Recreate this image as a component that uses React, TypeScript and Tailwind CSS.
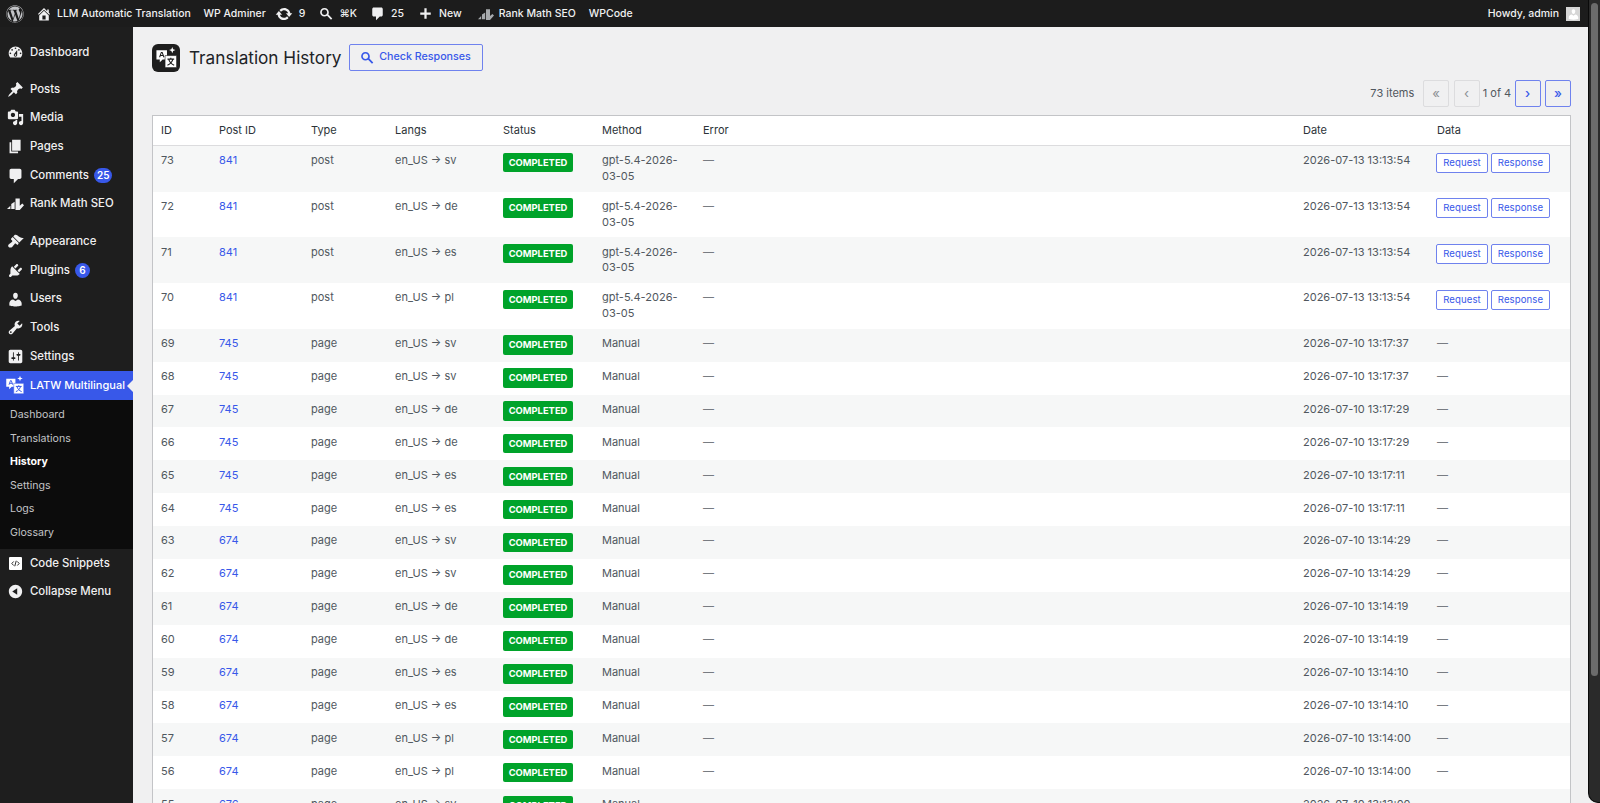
import React from 'react';
import { FaWordpress } from 'react-icons/fa';

const P: Record<string, string> = {
  dashboard: "M3.76 16h12.48c1.1-1.37 1.76-3.11 1.76-5 0-4.42-3.58-8-8-8s-8 3.58-8 8c0 1.89.66 3.63 1.76 5zM10 4c.55 0 1 .45 1 1s-.45 1-1 1-1-.45-1-1 .45-1 1-1zM6 6c.55 0 1 .45 1 1s-.45 1-1 1-1-.45-1-1 .45-1 1-1zm8 0c.55 0 1 .45 1 1s-.45 1-1 1-1-.45-1-1 .45-1 1-1zm-5.37 5.55L12 7v6c0 1.1-.9 2-2 2s-2-.9-2-2c0-.57.24-1.08.63-1.45zM4 10c.55 0 1 .45 1 1s-.45 1-1 1-1-.45-1-1 .45-1 1-1zm12 0c.55 0 1 .45 1 1s-.45 1-1 1-1-.45-1-1 .45-1 1-1zm-5 3c0-.55-.45-1-1-1s-1 .45-1 1 .45 1 1 1 1-.45 1-1z",
  posts: "M10.44 3.02l1.82-1.82 6.36 6.35-1.83 1.82c-1.05-.68-2.48-.57-3.41.36l-.75.75c-.92.93-1.04 2.35-.35 3.41l-1.83 1.82-2.41-2.41-2.8 2.79c-.42.42-3.38 2.71-3.8 2.29s1.86-3.39 2.28-3.81l2.79-2.79L4.1 9.36l1.83-1.82c1.05.69 2.48.57 3.41-.36l.75-.75c.93-.92 1.04-2.35.35-3.41z",
  media: "M13 11V4c0-.55-.45-1-1-1h-1.67L9 1H5L3.67 3H2c-.55 0-1 .45-1 1v7c0 .55.45 1 1 1h10c.55 0 1-.45 1-1zM7 4.5c1.38 0 2.5 1.12 2.5 2.5S8.38 9.5 7 9.5 4.5 8.38 4.5 7 5.62 4.5 7 4.5zM14 6h5v10.5c0 1.38-1.12 2.5-2.5 2.5S14 17.88 14 16.5s1.12-2.5 2.5-2.5c.17 0 .34.02.5.05V9h-3V6zm-4 8.05V13h2v3.5c0 1.38-1.12 2.5-2.5 2.5S7 17.88 7 16.5 8.12 14 9.5 14c.17 0 .34.02.5.05z",
  pages: "M6 15V2h10v13H6zm-1 1h8v2H3V5h2v11z",
  comments: "M5 2h10c1.1 0 2 .9 2 2v8c0 1.1-.9 2-2 2h-2l-5 5v-5H5c-1.1 0-2-.9-2-2V4c0-1.1.9-2 2-2z",
  appearance: "M14.48 11.06L7.41 3.99l1.5-1.5c.5-.56 2.3-.47 3.51.32 1.21.8 1.43 1.28 2.91 2.1 1.18.64 2.45 1.26 4.45.85zm-.71.71L6.7 4.7 4.93 6.47c-.39.39-.39 1.02 0 1.41l1.06 1.06c.39.39.39 1.03 0 1.42-.6.6-1.43 1.11-2.21 1.69-.35.26-.7.53-1.01.84C1.43 13.23.78 15.24 2 16.5s3.27.59 4.61-.76c.31-.31.58-.66.84-1.01.58-.78 1.09-1.61 1.69-2.21.39-.39 1.02-.39 1.41 0l1.06 1.06c.39.39 1.02.39 1.41 0z",
  plugins: "M13.11 4.36L9.87 7.6 8 5.73l3.24-3.24c.35-.34 1.05-.2 1.56.32.52.51.66 1.21.31 1.55zm-8 1.77l.91-1.12 9.01 9.01-1.19.84c-.71.71-2.63 1.16-3.82 1.16H6.14L4.9 17.26c-.59.59-1.54.59-2.12 0-.59-.58-.59-1.53 0-2.12l1.24-1.24v-3.88c0-1.13.4-3.19 1.09-3.89zm7.26 3.97l3.24-3.24c.34-.35 1.04-.21 1.55.31.52.51.66 1.21.31 1.55l-3.24 3.25z",
  users: "M10 9.25c-2.27 0-2.73-3.44-2.73-3.44C7 4.02 7.82 2 9.97 2c2.16 0 2.98 2.02 2.71 3.81 0 0-.41 3.44-2.68 3.44zm0 2.57L12.72 10c2.39 0 4.52 2.33 4.52 4.53v2.49s-3.65 1.13-7.24 1.13c-3.65 0-7.24-1.13-7.24-1.13v-2.49c0-2.25 1.94-4.48 4.47-4.48z",
  tools: "M16.68 9.77c-1.34 1.34-3.3 1.67-4.95.99l-5.41 6.52c-.99.99-2.59.99-3.58 0s-.99-2.59 0-3.57l6.52-5.42c-.68-1.65-.35-3.61.99-4.95 1.28-1.28 3.12-1.62 4.72-1.06l-2.89 2.89 2.82 2.82 2.86-2.87c.53 1.58.18 3.39-1.08 4.65zM3.81 16.21c.4.39 1.04.39 1.43 0 .4-.4.4-1.04 0-1.43-.39-.4-1.03-.4-1.43 0-.39.39-.39 1.03 0 1.43z",
  settings: "M18 16V4c0-1.1-.9-2-2-2H4c-1.1 0-2 .9-2 2v12c0 1.1.9 2 2 2h12c1.1 0 2-.9 2-2zM8 11h1c.55 0 1 .45 1 1s-.45 1-1 1H8v1.5c0 .28-.22.5-.5.5s-.5-.22-.5-.5V13H6c-.55 0-1-.45-1-1s.45-1 1-1h1V5.5c0-.28.22-.5.5-.5s.5.22.5.5V11zm5-2h-1c-.55 0-1-.45-1-1s.45-1 1-1h1V5.5c0-.28.22-.5.5-.5s.5.22.5.5V7h1c.55 0 1 .45 1 1s-.45 1-1 1h-1v5.5c0 .28-.22.5-.5.5s-.5-.22-.5-.5V9z",
  collapse: "M10 2.16c4.33 0 7.84 3.51 7.84 7.84s-3.51 7.84-7.84 7.84S2.16 14.33 2.16 10 5.71 2.16 10 2.16zm2 11.72V6.12L6.18 9.97z",
  update: "M10.2 3.28c3.53 0 6.43 2.61 6.92 6h2.08l-3.5 4-3.5-4h2.32c-.45-1.97-2.21-3.45-4.32-3.45-1.45 0-2.73.71-3.54 1.78L4.95 5.66C6.23 4.2 8.11 3.28 10.2 3.28zm-.4 13.44c-3.52 0-6.43-2.61-6.92-6H.8l3.5-4c1.17 1.33 2.33 2.67 3.5 4H5.48c.45 1.97 2.21 3.45 4.32 3.45 1.45 0 2.73-.71 3.54-1.78l1.71 1.95c-1.28 1.46-3.15 2.38-5.25 2.38z",
  home: "M16 8.5l1.53 1.53-1.06 1.06L10 4.62l-6.47 6.47-1.06-1.06L10 2.5l4 4v-2h2v4zm-6-2.46l6 5.99V18H4v-5.97zM12 17v-5H8v5h4z",
  plus: "M17 8.5v3h-5.5V17h-3v-5.5H3v-3h5.5V3h3v5.5H17z",
  search: "M12.5 11.3l5.2 5.2-1.7 1.7-5.2-5.2c-1 .7-2.2 1.1-3.4 1.1C4 14.1 1.5 11.6 1.5 8.3S4 2.5 7.3 2.5s5.8 2.5 5.8 5.8c0 1.1-.2 2.1-.6 3zM7.3 4.7c-2 0-3.6 1.6-3.6 3.6s1.6 3.6 3.6 3.6 3.6-1.6 3.6-3.6-1.6-3.6-3.6-3.6z",
  rank: "M0 16.5l4-4v4zM5 16.5V10.5l4-2.5V16.5zM10 16.5V4h5v8.5l3-2.5 2 2-5 5.500H10z",
};

function Dash({ n, c = 'w-[17px] h-[17px]' }: { n: string; c?: string }) {
  return (
    <svg viewBox="0 0 20 20" fill="currentColor" className={c}>
      <path d={P[n]} fillRule="evenodd" />
    </svg>
  );
}

function TranslateGlyph({ c }: { c: string }) {
  return (
    <svg viewBox="0 0 24 24" className={c}>
      <path d="M1.5 4.5h11v9.5H8l-3 3v-3H1.5z" fill="currentColor" />
      <path d="M4.8 11.7l1.8-5h.9l1.8 5M5.5 10h3.2" fill="none" stroke="var(--g,#1e1e1e)" strokeWidth="1.1" />
      <path d="M10.5 10h12v12.5h-12z" fill="currentColor" stroke="var(--g,#1e1e1e)" strokeWidth="0.6" />
      <path d="M13 13.7h7M16.5 12.3v1.4M18.7 13.7c-.7 2.900-3 5.200-5.700 6.300M14.300 13.700c.7 2.900 3 5.200 5.700 6.300" fill="none" stroke="var(--g,#1e1e1e)" strokeWidth="1.2" />
      <path d="M18 1l.9 2.400 2.400.9-2.400.9-.9 2.400-.9-2.400-2.400-.9 2.400-.9z" fill="currentColor" />
    </svg>
  );
}

type Item = { label: string; icon: string; badge?: string };
const menuA: Item[] = [
  { label: 'Posts', icon: 'posts' },
  { label: 'Media', icon: 'media' },
  { label: 'Pages', icon: 'pages' },
  { label: 'Comments', icon: 'comments', badge: '25' },
  { label: 'Rank Math SEO', icon: 'rank' },
];
const menuB: Item[] = [
  { label: 'Appearance', icon: 'appearance' },
  { label: 'Plugins', icon: 'plugins', badge: '6' },
  { label: 'Users', icon: 'users' },
  { label: 'Tools', icon: 'tools' },
  { label: 'Settings', icon: 'settings' },
];

function MenuRow({ label, icon, badge }: Item) {
  return (
    <div className="h-[28.6px] flex items-center text-[#f0f0f1] text-[11.4px] font-medium">
      <span className="w-[30px] flex justify-center pl-[1px] shrink-0">
        <Dash n={icon} />
      </span>
      <span>{label}</span>
      {badge && (
        <span className="ml-[5px] h-[15px] min-w-[15px] px-[3px] rounded-full bg-[#3858e9] text-white text-[10px] leading-[15px] text-center font-semibold">
          {badge}
        </span>
      )}
    </div>
  );
}

function TopItem({ children }: { children: React.ReactNode }) {
  return <div className="flex items-center h-full">{children}</div>;
}

type Row = [number, number, string, string, string, string, string];
const big: Row[] = [
  [73, 841, 'post', 'sv', 'gpt', '—', '2026-07-13 13:13:54'],
  [72, 841, 'post', 'de', 'gpt', '—', '2026-07-13 13:13:54'],
  [71, 841, 'post', 'es', 'gpt', '—', '2026-07-13 13:13:54'],
  [70, 841, 'post', 'pl', 'gpt', '—', '2026-07-13 13:13:54'],
];
const small: Row[] = [
  [69, 745, 'page', 'sv', 'Manual', '—', '2026-07-10 13:17:37'],
  [68, 745, 'page', 'sv', 'Manual', '—', '2026-07-10 13:17:37'],
  [67, 745, 'page', 'de', 'Manual', '—', '2026-07-10 13:17:29'],
  [66, 745, 'page', 'de', 'Manual', '—', '2026-07-10 13:17:29'],
  [65, 745, 'page', 'es', 'Manual', '—', '2026-07-10 13:17:11'],
  [64, 745, 'page', 'es', 'Manual', '—', '2026-07-10 13:17:11'],
  [63, 674, 'page', 'sv', 'Manual', '—', '2026-07-10 13:14:29'],
  [62, 674, 'page', 'sv', 'Manual', '—', '2026-07-10 13:14:29'],
  [61, 674, 'page', 'de', 'Manual', '—', '2026-07-10 13:14:19'],
  [60, 674, 'page', 'de', 'Manual', '—', '2026-07-10 13:14:19'],
  [59, 674, 'page', 'es', 'Manual', '—', '2026-07-10 13:14:10'],
  [58, 674, 'page', 'es', 'Manual', '—', '2026-07-10 13:14:10'],
  [57, 674, 'page', 'pl', 'Manual', '—', '2026-07-10 13:14:00'],
  [56, 674, 'page', 'pl', 'Manual', '—', '2026-07-10 13:14:00'],
  [55, 676, 'page', 'sv', 'Manual', '—', '2026-07-10 13:13:00'],
];

const COLS = 'grid grid-cols-[58px_92px_84px_108px_99px_101px_600px_134px_1fr]';

function SmallBtn({ w, children }: { w: string; children: React.ReactNode }) {
  return (
    <span className={`${w} inline-flex items-center justify-center h-[20px] border border-[#6f82ee] rounded-[2px] bg-white text-[#3858e9] text-[9.6px] tracking-[0.1px]`}>
      {children}
    </span>
  );
}

function PageBtn({ children, on }: { children: React.ReactNode; on?: boolean }) {
  return (
    <span
      className={
        on
          ? 'w-[26px] h-[27px] flex items-center justify-center border border-[#6f82ee] rounded-[2px] text-[#3858e9] text-[13px] font-medium'
          : 'w-[26px] h-[27px] flex items-center justify-center border border-[#dcdcde] rounded-[2px] bg-[#f0f0f1] text-[#8c8f94] text-[13px]'
      }
    >
      {children}
    </span>
  );
}

function TableRow({ r, i }: { r: Row; i: number }) {
  const gpt = r[4] === 'gpt';
  return (
    <div className={`${COLS} ${gpt ? 'h-[45.7px]' : 'h-[32.9px]'} ${i % 2 === 0 ? 'bg-[#f6f7f7]' : 'bg-white'} text-[#50575e] text-[11px] leading-[15.5px]`}>
      <div className="pl-[8px] pt-[7.4px]">{r[0]}</div>
      <div className="pl-[8px] pt-[7.4px] text-[#3858e9]">{r[1]}</div>
      <div className="pl-[8px] pt-[7.4px]">{r[2]}</div>
      <div className="pl-[8px] pt-[7.4px]">en_US → {r[3]}</div>
      <div className="pl-[8px] pt-[6.5px]">
        <span className="inline-flex items-center justify-center w-[70px] h-[19.5px] rounded-[2px] bg-[#00a32a] text-white text-[9.4px] font-bold">COMPLETED</span>
      </div>
      <div className="pl-[8px] pt-[7.4px] pr-[6px]">{gpt ? 'gpt-5.4-2026-03-05' : r[4]}</div>
      <div className="pl-[8px] pt-[7.4px] text-[#787c82]">{r[5]}</div>
      <div className="pl-[8px] pt-[7.4px]">{r[6]}</div>
      {gpt ? (
        <div className="pl-[7px] pt-[6.5px] flex items-start gap-[3px]">
          <SmallBtn w="w-[52px]">Request</SmallBtn>
          <SmallBtn w="w-[59px]">Response</SmallBtn>
        </div>
      ) : (
        <div className="pl-[8px] pt-[7.4px] text-[#787c82]">—</div>
      )}
    </div>
  );
}

export default function App() {
  return (
    <div className="relative h-[803px] w-[1600px] overflow-hidden bg-[#f0f0f1] flex flex-col font-['Inter','Liberation_Sans',sans-serif]">
      {/* Admin bar */}
      <header className="h-[27px] shrink-0 bg-[#1c1c1c] text-[#f0f0f1] text-[10.5px] font-medium flex items-center pl-[6px] pr-[20px]">
        <TopItem><FaWordpress className="w-[18px] h-[18px] text-[#c3c4c7]" /></TopItem>
        <TopItem><span className="ml-[12px]"><Dash n="home" c="w-[16px] h-[16px]" /></span><span className="ml-[5px]">LLM Automatic Translation</span></TopItem>
        <TopItem><span className="ml-[12.5px]">WP Adminer</span></TopItem>
        <TopItem><span className="ml-[9px]"><Dash n="update" c="w-[18px] h-[18px]" /></span><span className="ml-[6px]">9</span></TopItem>
        <TopItem><span className="ml-[14px]"><Dash n="search" c="w-[15px] h-[15px]" /></span><span className="ml-[5px]">⌘K</span></TopItem>
        <TopItem><span className="ml-[13px]"><Dash n="comments" c="w-[15px] h-[15px]" /></span><span className="ml-[6px]">25</span></TopItem>
        <TopItem><span className="ml-[14px]"><Dash n="plus" c="w-[15px] h-[15px]" /></span><span className="ml-[6px]">New</span></TopItem>
        <TopItem><span className="ml-[16px] text-[#a7aaad]"><Dash n="rank" c="w-[16px] h-[16px]" /></span><span className="ml-[5px]">Rank Math SEO</span></TopItem>
        <TopItem><span className="ml-[13px]">WPCode</span></TopItem>
        <div className="ml-auto flex items-center h-full">
          <span>Howdy, admin</span>
          <span className="ml-[7px] w-[14px] h-[14px] bg-[#d6d6d6] flex items-end justify-center overflow-hidden text-white"><Dash n="users" c="w-[13px] h-[13px]" /></span>
        </div>
      </header>

      <div className="flex flex-1 min-h-0">
        {/* Sidebar */}
        <aside className="w-[133px] shrink-0 bg-[#1e1e1e] pt-[11px]">
          <MenuRow label="Dashboard" icon="dashboard" />
          <div className="h-[8.5px]" />
          {menuA.map((m) => <MenuRow key={m.label} {...m} />)}
          <div className="h-[9.5px]" />
          {menuB.map((m) => <MenuRow key={m.label} {...m} />)}
          <div className="relative h-[29px] bg-[#3858e9] flex items-center text-white text-[11px] font-medium whitespace-nowrap">
            <span className="w-[30px] pl-[5px] shrink-0 [--g:#3858e9]"><TranslateGlyph c="w-[20px] h-[20px]" /></span>
            <span>LATW Multilingual</span>
            <span className="absolute right-0 top-[9px] w-0 h-0 border-y-[6px] border-y-transparent border-r-[6px] border-r-[#f0f0f1]" />
          </div>
          <div className="bg-[#0c0c0c] h-[149px] pt-[4px] pl-[10px] text-[#c3c4c7] text-[10.6px]">
            {['Dashboard', 'Translations', 'History', 'Settings', 'Logs', 'Glossary'].map((s) => (
              <div key={s} className={`h-[23.5px] flex items-center ${s === 'History' ? 'text-white font-bold' : ''}`}>{s}</div>
            ))}
          </div>
          <div className="h-[28.6px] mt-[1px] flex items-center text-[#f0f0f1] text-[11.4px] font-medium">
            <span className="w-[30px] flex justify-center shrink-0 pl-[1px]">
              <span className="w-[13px] h-[13px] bg-white rounded-[1px] flex items-center justify-center">
                <svg viewBox="0 0 12 12" className="w-[11px] h-[11px]" fill="none" stroke="#1e1e1e" strokeWidth="1"><path d="M4 3.8L2 6l2 2.2M8 3.8L10 6 8 8.2M6.8 3L5.2 9" /></svg>
              </span>
            </span>
            <span>Code Snippets</span>
          </div>
          <div className="-mt-[0.5px]"><MenuRow label="Collapse Menu" icon="collapse" /></div>
        </aside>

        {/* Content */}
        <main className="flex-1 min-w-0 pl-[19px] pr-[17px] pt-[17px]">
          <div className="flex items-center h-[27px]">
            <span className="w-[28px] h-[28px] rounded-[6px] bg-[#1e1e1e] text-white flex items-center justify-center">
              <TranslateGlyph c="w-[23px] h-[23px]" />
            </span>
            <h1 className="ml-[9px] text-[17.2px] leading-none text-[#1d2327] font-normal">Translation History</h1>
            <button className="ml-[7px] w-[134px] h-[27px] flex items-center justify-center gap-[4px] border border-[#6f82ee] rounded-[2px] text-[#3858e9] text-[10.7px] font-medium">
              <Dash n="search" c="w-[15px] h-[15px]" />
              Check Responses
            </button>
          </div>
          <div className="mt-[9px] h-[27px] flex items-center justify-end text-[#50575e] text-[11px]">
            <span className="mr-[8.7px]">73 items</span>
            <PageBtn>«</PageBtn>
            <span className="w-[4.5px]" />
            <PageBtn>‹</PageBtn>
            <span className="w-[35px] text-center">1 of 4</span>
            <PageBtn on>›</PageBtn>
            <span className="w-[4.5px]" />
            <PageBtn on>»</PageBtn>
          </div>
          <div className="mt-[8px] border border-[#c3c4c7] bg-white">
            <div className={`${COLS} h-[30px] items-center border-b border-[#dcdcde] text-[#2c3338] text-[11px]`}>
              {['ID', 'Post ID', 'Type', 'Langs', 'Status', 'Method', 'Error', 'Date', 'Data'].map((h) => (
                <div key={h} className="pl-[8px]">{h}</div>
              ))}
            </div>
            {big.map((r, i) => <TableRow key={r[0]} r={r} i={i} />)}
            {small.map((r, i) => <TableRow key={r[0]} r={r} i={i} />)}
          </div>
        </main>
        {/* Scrollbar */}
        <div className="w-[12px] shrink-0" />
      </div>
      <div className="absolute right-0 top-0 bottom-0 w-[12px] bg-[#2a2a2a] border-l border-b border-[#0a0a0a] rounded-bl-[10px] flex justify-center pt-[3px]">
        <span className="w-[7px] h-[673px] rounded-full bg-[#6b6b6b]" />
      </div>
    </div>
  );
}
